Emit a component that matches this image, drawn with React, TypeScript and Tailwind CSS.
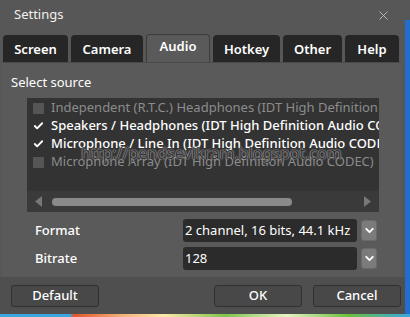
import { Check, ChevronDown, X } from "lucide-react";

const sources = [
  { name: "Independent (R.T.C.) Headphones (IDT High Definition Audio CODEC)", on: false },
  { name: "Speakers / Headphones (IDT High Definition Audio CODEC)", on: true },
  { name: "Microphone / Line In (IDT High Definition Audio CODEC)", on: true },
  { name: "Microphone Array (IDT High Definition Audio CODEC)", on: false },
];

const tabs = [
  { label: "Screen", w: "w-[65px]" },
  { label: "Camera", w: "w-[72px]" },
  { label: "Audio", w: "w-[64px]" },
  { label: "Hotkey", w: "w-[67px]" },
  { label: "Other", w: "w-[59px]" },
  { label: "Help", w: "w-[54px]" },
];

function Dropdown({ value }: { value: string }) {
  return (
    <div className="flex items-center gap-[4px]">
      <div className="w-[174px] h-[23px] rounded-[3px] bg-[#2b2b2b] flex items-center px-[2px] text-[13px] text-white">
        {value}
      </div>
      <div className="w-[16px] h-[21px] rounded-[3px] bg-[#7b7b7b] border border-[#6a6a6a] flex items-center justify-center">
        <ChevronDown size={13} strokeWidth={3.5} className="text-white" />
      </div>
    </div>
  );
}

export default function App() {
  return (
    <div
      className="w-[410px] h-[317px] flex flex-col bg-[#575757] overflow-hidden"
      style={{ fontFamily: '"Noto Sans", "Open Sans", sans-serif' }}
    >
      <div className="flex flex-1 min-h-0">
        <div className="flex-1 flex flex-col">
          {/* Title */}
          <div className="h-[30px] flex items-center justify-between pl-[14px] pr-[14px]">
            <span className="text-[13px] text-[#f0f0f0]">Settings</span>
            <X size={15} strokeWidth={1.5} className="text-[#bdbdbd]" />
          </div>

          {/* Tabs */}
          <div className="h-[32px] flex items-end gap-[3px] pl-[3px]">
            {tabs.map((t) =>
              t.label === "Audio" ? (
                <div
                  key={t.label}
                  className={`${t.w} h-[28px] rounded-t-[4px] bg-[#5a5a5a] border border-b-0 border-[#3c3c3c] flex items-center justify-center text-[13px] font-semibold text-white pb-[3px]`}
                >
                  {t.label}
                </div>
              ) : (
                <div
                  key={t.label}
                  className={`${t.w} h-[27px] rounded-t-[4px] bg-[#262626] flex items-center justify-center text-[13px] font-semibold text-white pt-[2px]`}
                >
                  {t.label}
                </div>
              )
            )}
          </div>

          {/* Panel */}
          <div className="h-[215px] ml-[2px] mr-[4px] bg-[#5a5a5a] border-t border-[#4a4a4a] flex flex-col">
            <div className="pl-[9px] pt-[10px] h-[35px] text-[13px] text-white">Select source</div>
            <div className="ml-[25px] w-[352px] h-[114px] bg-[#333333] flex flex-col relative">
              <div className="flex-1 flex flex-col pt-[1px] overflow-hidden">
                {sources.map((s) => (
                  <div key={s.name} className="h-[18px] flex items-center gap-[7px] pl-[6px] whitespace-nowrap">
                    <div
                      className={`w-[11px] h-[11px] shrink-0 flex items-center justify-center ${
                        s.on ? "" : "bg-[#555555]"
                      }`}
                    >
                      {s.on && <Check size={12} strokeWidth={4} className="text-white" />}
                    </div>
                    <span className={`text-[13px] ${s.on ? "text-white font-medium" : "text-[#8c8c8c]"}`}>
                      {s.name}
                    </span>
                  </div>
                ))}
              </div>
              {/* watermark over the list */}
              <span className="absolute left-[54px] top-[43px] text-[16px] text-[#333333] [text-shadow:0_0_1px_#c8c8c8,0_0_2px_#9a9a9a]">
                http://pendsevikram.blogspot.com
              </span>
              {/* Scrollbar */}
              <div className="h-[21px] bg-[#3a3a3a] flex items-center px-[8px] gap-[10px]">
                <svg width="7" height="11" viewBox="0 0 7 11">
                  <path d="M7 0 L0 5.5 L7 11 Z" fill="#777" />
                </svg>
                <div className="w-[240px] h-[8px] rounded-full bg-[#8a8a8a]" />
                <div className="flex-1" />
                <svg width="7" height="11" viewBox="0 0 7 11">
                  <path d="M0 0 L7 5.5 L0 11 Z" fill="#777" />
                </svg>
              </div>
            </div>
            <div className="flex flex-col gap-[5px] pt-[7px]">
              <div className="flex items-center">
                <span className="w-[181px] pl-[33px] text-[13px] text-white font-medium">Format</span>
                <Dropdown value="2 channel, 16 bits, 44.1 kHz" />
              </div>
              <div className="flex items-center">
                <span className="w-[181px] pl-[33px] text-[13px] text-white font-medium">Bitrate</span>
                <Dropdown value="128" />
              </div>
            </div>
          </div>

          {/* Buttons */}
          <div className="flex-1 bg-[#4f4f4f] flex items-start pt-[8px] pl-[11px] pr-[4px]">
            <button className="w-[88px] h-[22px] rounded-[3px] bg-[#484848] border border-[#303030] text-[13px] text-white font-medium">
              Default
            </button>
            <div className="flex-1" />
            <button className="w-[88px] h-[22px] rounded-[3px] bg-[#484848] border border-[#303030] text-[13px] text-white font-medium mr-[11px]">
              OK
            </button>
            <button className="w-[88px] h-[22px] rounded-[3px] bg-[#484848] border border-[#303030] text-[13px] text-white font-medium">
              Cancel
            </button>
          </div>
        </div>
        <div className="w-[5px] flex flex-col">
          <div className="h-[20px] bg-[#575757]" />
          <div className="flex-1 bg-[#1f6fcf]" />
        </div>
      </div>
      <div className="h-[3px] bg-[linear-gradient(90deg,#3aa6e0_0%,#3aa6e0_17%,#e2572a_18%,#f3b37a_30%,#fbe9a8_40%,#7fc44d_55%,#e7f3c6_70%,#6abf3a_85%,#3aa6e0_100%)]" />
    </div>
  );
}
